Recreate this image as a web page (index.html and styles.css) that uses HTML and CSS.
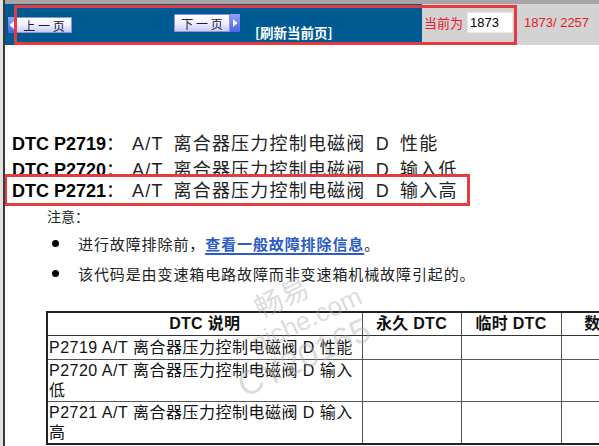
FILE: index.html
```html
<!DOCTYPE html>
<html lang="zh-CN">
<head>
<meta charset="utf-8">
<title>DTC P2719</title>
<link rel="stylesheet" href="styles.css">
</head>
<body>
<div class="page">
  <div class="topstrip"></div>
  <div class="toolbar">
    <div class="nav">
      <div class="btn prev">
        <span class="tab"><svg width="8" height="10" viewBox="0 0 8 10"><path d="M6 1 L1.5 5 L6 9 Z" fill="#fff"/></svg></span>
        <span class="label">上 一 页</span>
      </div>
      <div class="btn next">
        <span class="label">下 一 页</span>
        <span class="tab"><svg width="8" height="10" viewBox="0 0 8 10"><path d="M2 1 L6.5 5 L2 9 Z" fill="#fff"/></svg></span>
      </div>
      <span class="refresh">[刷新当前页]</span>
    </div>
    <div class="pager">
      <span class="cur">当前为</span>
      <input class="pagein" type="text" value="1873">
      <span class="total">1873/ 2257</span>
    </div>
  </div>

  <div class="content">
    <div class="dtc l1"><b>DTC P2719</b>：<span class="desc">A/T 离合器压力控制电磁阀 D 性能</span></div>
    <div class="dtc l2"><b>DTC P2720</b>：<span class="desc">A/T 离合器压力控制电磁阀 D 输入低</span></div>
    <div class="dtc l3"><b>DTC P2721</b>：<span class="desc">A/T 离合器压力控制电磁阀 D 输入高</span></div>

    <div class="note">注意：</div>
    <ul class="bullets">
      <li><span class="dot"></span><span class="txt">进行故障排除前，<a class="link" href="#">查看一般故障排除信息</a>。</span></li>
      <li><span class="dot"></span><span class="txt">该代码是由变速箱电路故障而非变速箱机械故障引起的。</span></li>
    </ul>

    <div class="tablewrap">
      <table class="dtctable">
        <colgroup>
          <col class="c1"><col class="c2"><col class="c3"><col class="c4">
        </colgroup>
        <tr class="head">
          <th>DTC 说明</th><th>永久 DTC</th><th>临时 DTC</th><th>数据表</th>
        </tr>
        <tr class="r1">
          <td>P2719 A/T 离合器压力控制电磁阀 D 性能</td><td></td><td></td><td></td>
        </tr>
        <tr class="r2">
          <td>P2720 A/T 离合器压力控制电磁阀 D 输入<br>低</td><td></td><td></td><td></td>
        </tr>
        <tr class="r2">
          <td>P2721 A/T 离合器压力控制电磁阀 D 输入<br>高</td><td></td><td></td><td></td>
        </tr>
      </table>
    </div>
  </div>

  <div class="watermark">
    <div class="wm1">畅易</div>
    <div class="wm2">qiche.com</div>
    <div class="wm3">CY20165</div>
  </div>

  <div class="mark mark-top"></div>
  <div class="mark mark-dtc"></div>
</div>
</body>
</html>
```
FILE: styles.css
```css
html, body {
  margin: 0;
  padding: 0;
  overflow: hidden;
  height: 100%;
}
body {
  background: #e2e2e2;
  font-family: "Liberation Sans", "Noto Sans CJK SC", sans-serif;
  color: #111;
}
.page {
  position: relative;
  margin-left: 3px;
  border-left: 2px solid #3a3a3a;
  background: #fff;
  min-height: 100%;
  overflow: hidden;
}
.topstrip {
  height: 4px;
  background: #a6a6a6;
}
.toolbar {
  display: flex;
  height: 41px;
}
.nav {
  width: 417px;
  background: #005a92;
  display: flex;
  align-items: flex-start;
}
.btn {
  display: flex;
  font-family: "Noto Sans CJK SC", sans-serif;
  font-size: 12px;
  color: #1a1a40;
}
.btn .label {
  display: flex;
  align-items: center;
  justify-content: center;
  background: linear-gradient(#ffffff, #f2f2ff 45%, #cbcbf2);
  border: 1px solid #8f93d6;
  box-sizing: border-box;
}
.btn .tab {
  display: flex;
  align-items: center;
  justify-content: center;
  width: 8px;
  background: linear-gradient(#8fa0ff, #4f62e6);
}
.prev {
  margin-left: 3px;
  margin-top: 13px;
  height: 16px;
}
.prev .label { width: 56px; height: 16px; }
.next {
  margin-left: 102px;
  margin-top: 10px;
  height: 18px;
}
.next .label { width: 56px; height: 18px; }
.next .tab { width: 10px; }
.refresh {
  margin-left: 15px;
  margin-top: 19px;
  color: #fff;
  font-weight: bold;
  font-size: 13.5px;
  font-family: "Noto Sans CJK SC", sans-serif;
  line-height: 18px;
}
.pager {
  flex: 1;
  background: #d3d3d3;
  display: flex;
  align-items: flex-start;
  padding-top: 8px;
  padding-left: 2px;
}
.cur {
  color: #e3202c;
  font-family: "Noto Sans CJK SC", sans-serif;
  font-size: 13px;
  line-height: 21px;
}
.pagein {
  margin-left: 4px;
  width: 46px;
  height: 21px;
  box-sizing: border-box;
  border: 1px solid #e8e8e8;
  padding: 0 2px;
  font-family: "Liberation Sans", sans-serif;
  font-size: 13px;
  color: #000;
  background: #fff;
  outline: none;
}
.total {
  margin-left: 11px;
  color: #e3202c;
  font-size: 13px;
  line-height: 21px;
  font-family: "Liberation Sans", sans-serif;
}

.content {
  padding-left: 7px;
  padding-top: 87px;
}
.dtc {
  font-size: 18px;
  line-height: 24px;
  white-space: nowrap;
  color: #111;
}
.dtc b {
  font-weight: bold;
  color: #000;
}
.dtc .desc {
  color: #222;
  letter-spacing: 1.2px;
  word-spacing: 4px;
  margin-left: 8px;
}
.l1 { height: 26px; }
.l2 { height: 16px; overflow: hidden; }
.l3 { padding-top: 5px; height: 26px; }

.note {
  margin-left: 35px;
  font-family: "Noto Sans CJK SC", sans-serif;
  font-size: 14px;
  line-height: 20px;
  color: #222;
  margin-top: 1px;
}
.bullets {
  list-style: none;
  margin: 5px 0 0 35px;
  padding: 0;
}
.bullets li {
  display: flex;
  align-items: center;
  height: 24px;
  margin-bottom: 6px;
}
.dot {
  width: 7px;
  height: 7px;
  border-radius: 50%;
  background: #000;
  margin-left: 5px;
  margin-right: 19px;
}
.txt {
  font-family: "Noto Sans CJK SC", sans-serif;
  font-size: 15px;
  letter-spacing: 0.9px;
  color: #222;
  white-space: nowrap;
}
.link {
  color: #2c5cc6;
  font-weight: bold;
  text-decoration: underline;
  text-decoration-thickness: 2px;
  text-underline-offset: 3px;
}

.tablewrap {
  margin-left: 34px;
  margin-top: 26px;
}
.dtctable {
  border-collapse: collapse;
  table-layout: fixed;
  width: 610px;
  border: 2px solid #222;
}
.c1 { width: 315px; }
.c2 { width: 99px; }
.c3 { width: 100px; }
.c4 { width: 96px; }
.dtctable th,
.dtctable td {
  border: 1px solid #555;
  padding: 0 1px;
  font-size: 16px;
  line-height: 20px;
  text-align: left;
  vertical-align: top;
  color: #111;
  white-space: nowrap;
  letter-spacing: 0.5px;
}
.dtctable th {
  text-align: center;
  font-weight: bold;
  height: 22px;
  vertical-align: middle;
  border-bottom: 1px solid #333;
  letter-spacing: 0.3px;
}
.dtctable tr.r1 td { height: 23px; vertical-align: middle; }
.dtctable tr.r2 td { height: 41px; padding-top: 1px; box-sizing: border-box; }

.watermark {
  position: absolute;
  left: 227px;
  top: 300px;
  width: 190px;
  height: 150px;
  color: rgba(170, 170, 170, 0.42);
  font-family: "Liberation Sans", "Noto Sans CJK SC", sans-serif;
  pointer-events: none;
  transform: rotate(-25deg);
  transform-origin: 0 0;
}
.wm1 {
  font-family: "Noto Sans CJK SC", sans-serif;
  font-size: 28px;
  line-height: 34px;
  margin-left: 18px;
}
.wm2 {
  font-size: 26px;
  line-height: 30px;
  margin-left: 0;
}
.wm3 {
  font-size: 34px;
  line-height: 36px;
  margin-left: -30px;
}

.mark {
  position: absolute;
  border: 3px solid #e43a40;
  box-sizing: border-box;
  pointer-events: none;
}
.mark-top {
  left: 9px;
  top: 5px;
  width: 503px;
  height: 40px;
}
.mark-dtc {
  left: -1px;
  top: 174px;
  width: 466px;
  height: 32px;
}
```
